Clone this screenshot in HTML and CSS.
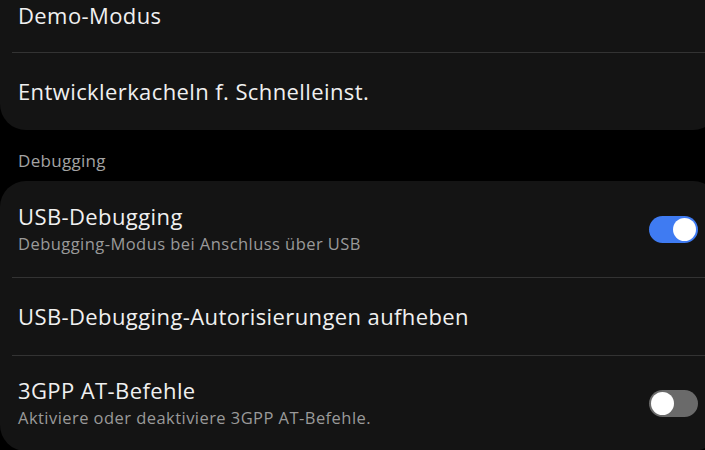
FILE: index.html
```html
<!DOCTYPE html>
<html lang="de">
<head>
<meta charset="utf-8">
<link rel="stylesheet" href="styles.css">
</head>
<body>
<div class="screen">
  <section class="card card-top">
    <div class="row row-first"><span class="title">Demo-Modus</span></div>
    <div class="row row-single"><span class="title">Entwicklerkacheln f. Schnelleinst.</span></div>
  </section>
  <div class="header">Debugging</div>
  <section class="card">
    <div class="row row-double">
      <div class="texts">
        <span class="title">USB-Debugging</span>
        <span class="sub">Debugging-Modus bei Anschluss über USB</span>
      </div>
      <span class="toggle on"><span class="knob"></span></span>
    </div>
    <div class="row row-single"><span class="title">USB-Debugging-Autorisierungen aufheben</span></div>
    <div class="row row-double">
      <div class="texts">
        <span class="title">3GPP AT-Befehle</span>
        <span class="sub">Aktiviere oder deaktiviere 3GPP AT-Befehle.</span>
      </div>
      <span class="toggle off"><span class="knob"></span></span>
    </div>
  </section>
</div>
</body>
</html>
```
FILE: styles.css
```css
html, body {
  margin: 0;
  padding: 0;
  background: #000;
  width: 705px;
  height: 450px;
  overflow: hidden;
}
.screen {
  font-family: "Open Sans", "Noto Sans", sans-serif;
  color: #f2f2f2;
}
.card {
  background: #141414;
  border-radius: 26px;
  margin-right: -14px;
  display: flex;
  flex-direction: column;
}
.card-top {
  border-top-left-radius: 0;
  border-top-right-radius: 0;
}
.row {
  display: flex;
  align-items: center;
  justify-content: space-between;
  padding: 0 21px 0 18px;
  position: relative;
  box-sizing: border-box;
}
.row + .row::before {
  content: "";
  position: absolute;
  top: 0;
  left: 12px;
  right: 0;
  height: 1px;
  background: #333;
}
.row-first {
  height: 52px;
  align-items: flex-start;
  padding-top: 3px;
}
.row-single {
  height: 78px;
}
.row-double {
  height: 96px;
}
.texts {
  display: flex;
  flex-direction: column;
  gap: 6px;
}
.title {
  font-size: 22px;
  line-height: 24px;
  letter-spacing: 0.4px;
  color: #f0f0f0;
}
.sub {
  font-size: 16.5px;
  line-height: 20px;
  letter-spacing: 0.45px;
  color: #9a9a9a;
}
.header {
  height: 51px;
  box-sizing: border-box;
  padding: 21px 0 0 18px;
  font-size: 17px;
  line-height: 20px;
  letter-spacing: 0.3px;
  color: #a3a3a3;
}
.toggle {
  width: 49px;
  height: 27px;
  border-radius: 14px;
  box-sizing: border-box;
  display: flex;
  align-items: center;
  padding: 0 2px;
  flex-shrink: 0;
}
.toggle.on {
  background: #3f7bf2;
  justify-content: flex-end;
}
.toggle.off {
  background: #6a6a6a;
  justify-content: flex-start;
}
.knob {
  width: 23px;
  height: 23px;
  border-radius: 50%;
  background: #fff;
}
```
